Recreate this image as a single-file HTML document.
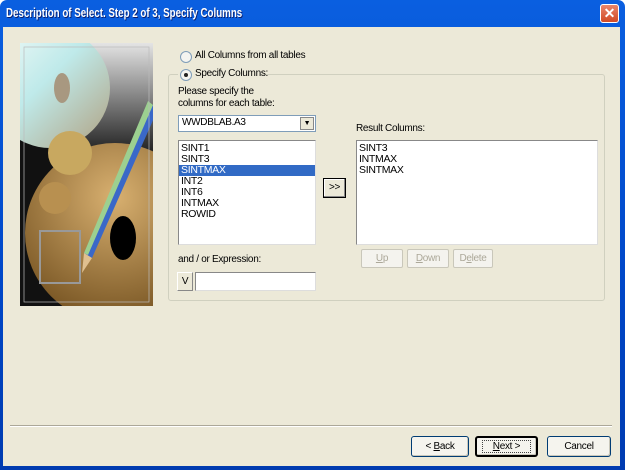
<!DOCTYPE html>
<html><head><style>
*{margin:0;padding:0;box-sizing:border-box}
body{width:625px;height:470px;overflow:hidden;font-family:"Liberation Sans",sans-serif;font-size:10px;letter-spacing:-0.3px;color:#000;background:#fff}
.win{position:absolute;left:0;top:0;width:625px;height:470px;background:linear-gradient(#0a5fe0,#0047c8 60%,#003bb0);border-radius:7px 7px 0 0}
.title{position:absolute;left:6px;top:6px;color:#fff;font-weight:bold;font-size:12.5px;letter-spacing:0;text-shadow:1px 1px 0 #0a1d6b;transform:scaleX(0.78);transform-origin:left top;white-space:nowrap}
.close{position:absolute;left:600px;top:4px;width:19px;height:19px;background:linear-gradient(#e8856a,#d24a25);border:1px solid #fff;border-radius:3px;color:#fff;font-weight:bold;text-align:center;line-height:16px;font-size:14px;letter-spacing:0}
.client{position:absolute;left:3px;top:27px;width:617px;height:439px;background:#ece9d8}
.a{position:absolute;white-space:nowrap}
.sunk{background:#fff;border:1px solid;border-color:#7f9db9}
.btn{position:absolute;background:#f5f4ee;border:1px solid #003c74;border-radius:3px;text-align:center;box-shadow:inset -1px -1px 0 #c9c7ba}
.dis{position:absolute;border:1px solid #c9c7ba;background:#f4f3ee;color:#aca899;text-align:center;border-radius:2px}
.radio{position:absolute;width:12px;height:12px;border-radius:50%;border:1px solid #7f9db9;background:#f4f4f0}
.li{height:11px;line-height:11px;padding-left:2px;font-size:10.5px}
</style></head><body>
<div class="win">
<div class="title">Description of Select. Step 2 of 3, Specify Columns</div>
<div class="close">✕</div>
<div class="client">
</div>
</div>
<svg class="a" style="left:20px;top:43px" width="133" height="263">
<defs>
<linearGradient id="g1" x1="0" y1="0" x2="1" y2="1"><stop offset="0" stop-color="#f4fbf8"/><stop offset=".45" stop-color="#bfeaea"/><stop offset="1" stop-color="#b0a080"/></linearGradient>
<linearGradient id="g2" x1="0" y1="0" x2="0" y2="1"><stop offset="0" stop-color="#e4e4e4"/><stop offset="1" stop-color="#202020"/></linearGradient>
<radialGradient id="g3" cx=".5" cy=".3" r=".8"><stop offset="0" stop-color="#d8b070"/><stop offset="1" stop-color="#6a4818"/></radialGradient>
</defs>
<rect width="133" height="263" fill="#111"/>
<rect x="60" y="0" width="73" height="110" fill="url(#g2)"/>
<circle cx="30" cy="45" r="60" fill="url(#g1)"/>
<circle cx="95" cy="190" r="90" fill="url(#g3)"/>
<circle cx="50" cy="110" r="22" fill="#c8a860"/>
<circle cx="35" cy="155" r="16" fill="#b89050"/>
<ellipse cx="42" cy="45" rx="8" ry="15" fill="#a89880"/>
<ellipse cx="103" cy="195" rx="13" ry="22" fill="#000"/>
<rect x="20" y="188" width="40" height="52" fill="none" stroke="#999" stroke-width="2"/>
<polygon points="130,60 138,66 72,215 64,210" fill="#3a68c8"/>
<polygon points="128,58 133,62 68,212 64,210" fill="#9cd090"/>
<polygon points="64,210 72,215 62,230" fill="#e0c090"/>
<rect x="4" y="4" width="125" height="255" fill="none" stroke="#bbb" stroke-width=".7"/>
</svg>
<div class="radio" style="left:180px;top:51px"></div>
<div class="a" style="left:195px;top:50px">All Columns from all tables</div>
<div class="a" style="left:168px;top:74px;width:437px;height:227px;border:1px solid #d0d0bf;border-radius:3px"></div>
<div class="a" style="left:178px;top:67px;width:82px;height:14px;background:#ece9d8"></div>
<div class="radio" style="left:180px;top:69px"><div style="position:absolute;left:3px;top:3px;width:4px;height:4px;border-radius:50%;background:#222"></div></div>
<div class="a" style="left:195px;top:68px">Specify Columns:</div>
<div class="a" style="left:178px;top:86px;line-height:12px">Please specify the<br>columns for each table:</div>
<div class="a sunk" style="left:178px;top:115px;width:138px;height:17px"><div style="padding:1px 3px">WWDBLAB.A3</div>
<div class="a" style="right:1px;top:1px;width:14px;height:13px;background:#ece9d8;border:1px solid #888;font-size:7px;text-align:center;line-height:12px">▼</div></div>
<div class="a sunk" style="left:178px;top:140px;width:138px;height:105px;border-color:#888 #ddd #ddd #888;padding-top:2px">
<div class="li">SINT1</div><div class="li">SINT3</div><div class="li" style="background:#316ac5;color:#fff">SINTMAX</div><div class="li">INT2</div><div class="li">INT6</div><div class="li">INTMAX</div><div class="li">ROWID</div></div>
<div class="a" style="left:323px;top:178px;width:23px;height:20px;border:1px solid #000;background:#ece9d8;box-shadow:inset -1px -1px 0 #888,inset 1px 1px 0 #fff;text-align:center;line-height:17px;font-size:10px">&gt;&gt;</div>
<div class="a" style="left:356px;top:123px">Result Columns:</div>
<div class="a sunk" style="left:356px;top:140px;width:242px;height:105px;border-color:#888 #ddd #ddd #888;padding-top:2px">
<div class="li">SINT3</div><div class="li">INTMAX</div><div class="li">SINTMAX</div></div>
<div class="dis" style="left:361px;top:249px;width:42px;height:19px;line-height:17px"><u>U</u>p</div>
<div class="dis" style="left:407px;top:249px;width:42px;height:19px;line-height:17px"><u>D</u>own</div>
<div class="dis" style="left:453px;top:249px;width:40px;height:19px;line-height:17px">D<u>e</u>lete</div>
<div class="a" style="left:178px;top:254px">and / or Expression:</div>
<div class="a" style="left:177px;top:272px;width:16px;height:19px;background:#ece9d8;border:1px solid;border-color:#fff #888 #888 #fff;text-align:center;line-height:17px">V</div>
<div class="a sunk" style="left:195px;top:272px;width:121px;height:19px;border-color:#888 #ddd #ddd #888"></div>
<div class="a" style="left:10px;top:425px;width:602px;height:2px;border-top:1px solid #aca899;border-bottom:1px solid #fff"></div>
<div class="btn" style="left:411px;top:436px;width:58px;height:21px;line-height:19px">&lt; <u>B</u>ack</div>
<div class="btn" style="left:475px;top:436px;width:63px;height:21px;line-height:17px;border:2px solid #000"><span style="border:1px dotted #444;padding:0 10px"><u>N</u>ext &gt;</span></div>
<div class="btn" style="left:547px;top:436px;width:64px;height:21px;line-height:19px">Cancel</div>
</body></html>
